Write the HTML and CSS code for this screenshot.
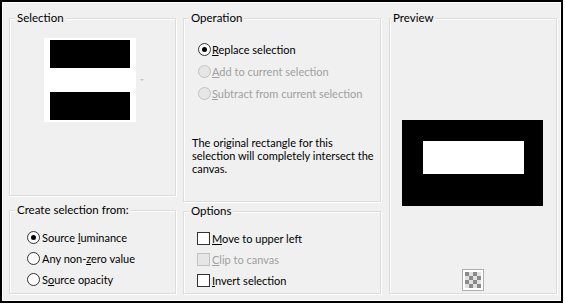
FILE: index.html
```html
<!DOCTYPE html>
<html lang="en">
<head>
    <meta charset="UTF-8">
    <title>Selection from mask</title>
    <link rel="stylesheet" href="styles.css">
</head>
<body>
    <div class="dialog">
        <div class="column">
            <fieldset class="group group-selection">
                <legend>Selection</legend>
                <div class="thumb-row">
                    <div class="thumb">
                        <div class="thumb-bar"></div>
                        <div class="thumb-bar"></div>
                    </div>
                    <span class="drop-arrow"></span>
                </div>
            </fieldset>
            <fieldset class="group group-source">
                <legend>Create selection from:</legend>
                <div class="option-list">
                    <label class="option"><span class="radio checked"></span><span>Source <u>l</u>uminance</span></label>
                    <label class="option"><span class="radio"></span><span>Any non-<u>z</u>ero value</span></label>
                    <label class="option"><span class="radio"></span><span>S<u>o</u>urce opacity</span></label>
                </div>
            </fieldset>
        </div>

        <div class="column">
            <fieldset class="group group-operation">
                <legend>Operation</legend>
                <div class="option-list">
                    <label class="option"><span class="radio checked"></span><span><u>R</u>eplace selection</span></label>
                    <label class="option disabled"><span class="radio"></span><span><u>A</u>dd to current selection</span></label>
                    <label class="option disabled"><span class="radio"></span><span><u>S</u>ubtract from current selection</span></label>
                </div>
                <p class="note">
                    The original rectangle for this<br>
                    selection will completely intersect the<br>
                    canvas.
                </p>
            </fieldset>
            <fieldset class="group group-options">
                <legend>Options</legend>
                <div class="option-list">
                    <label class="option"><span class="check"></span><span><u>M</u>ove to upper left</span></label>
                    <label class="option disabled"><span class="check"></span><span><u>C</u>lip to canvas</span></label>
                    <label class="option"><span class="check"></span><span><u>I</u>nvert selection</span></label>
                </div>
            </fieldset>
        </div>

        <div class="column column-preview">
            <fieldset class="group group-preview">
                <legend>Preview</legend>
                <div class="preview-box">
                    <div class="preview-hole"></div>
                </div>
                <span class="checker-button">
                    <svg width="22" height="22" viewBox="0 0 22 22">
                        <rect x="0.5" y="0.5" width="21" height="21" fill="#fff" stroke="#adadad"/>
                        <rect x="3" y="3" width="16" height="16" fill="#e2e2e2"/>
                        <g fill="#8a8a8a">
                            <rect x="3" y="3" width="4" height="4"/>
                            <rect x="11" y="3" width="4" height="4"/>
                            <rect x="7" y="7" width="4" height="4"/>
                            <rect x="15" y="7" width="4" height="4"/>
                            <rect x="3" y="11" width="4" height="4"/>
                            <rect x="11" y="11" width="4" height="4"/>
                            <rect x="7" y="15" width="4" height="4"/>
                            <rect x="15" y="15" width="4" height="4"/>
                        </g>
                    </svg>
                </span>
            </fieldset>
        </div>
    </div>
</body>
</html>
```

FILE: styles.css
```css
/* Общие стили */
* {
    margin: 0;
    padding: 0;
    box-sizing: border-box;
}

body {
    background: #fff;
    font-family: Lato, "Open Sans", sans-serif;
    font-size: 11px;
    color: #000;
}

/* Окно диалога */
.dialog {
    width: 563px;
    height: 303px;
    border: 2px solid #000;
    background: #f0f0f0;
    box-shadow: inset 0 0 0 1px #fff;
    padding: 9px 0 7px 7px;
    display: flex;
    gap: 7px;
}

.column {
    display: flex;
    flex-direction: column;
}

.column-preview {
    margin-left: 1px;
}

/* Рамка группы */
.group {
    border: 1px solid #dcdcdc;
    box-shadow: 1px 1px 0 #fff, inset 1px 1px 0 #fff;
    min-width: 0;
}

.group legend {
    margin-left: 5px;
    padding: 0 2px;
    font-size: 11.5px;
    line-height: 14px;
    background: #f0f0f0;
}

.group-selection {
    width: 167px;
    height: 185px;
}

.group-source {
    width: 167px;
    height: 91px;
    margin-top: 7px;
}

.group-operation {
    width: 198px;
    height: 191px;
}

.group-options {
    width: 198px;
    height: 90px;
    margin-top: 2px;
}

.group-preview {
    width: 168px;
    height: 283px;
    display: flex;
    flex-direction: column;
}

.group-preview legend {
    margin-left: 1px;
}

/* Миниатюра выделения */
.thumb-row {
    display: flex;
    align-items: center;
    margin: 13px 0 0 34px;
}

.thumb {
    width: 92px;
    height: 84px;
    background: #fff;
    padding: 2px 6px;
    display: flex;
    flex-direction: column;
    justify-content: space-between;
}

.thumb-bar {
    height: 28px;
    background: #000;
}

.drop-arrow {
    margin-left: 4px;
    border-left: 2px solid transparent;
    border-right: 2px solid transparent;
    border-top: 2px solid #c4c4c4;
}

/* Переключатели и флажки */
.option-list {
    margin-top: 10px;
}

.group-operation .option-list {
    margin-top: 13px;
}

.option {
    display: flex;
    align-items: center;
    height: 21px;
    white-space: nowrap;
}

.group-operation .option {
    height: 22px;
    padding-left: 14px;
}

.group-source .option {
    padding-left: 17px;
}

.group-options .option {
    padding-left: 13px;
}

.option u {
    text-decoration-thickness: 1px;
    text-underline-offset: 1px;
}

.option.disabled {
    color: #a0a0a0;
}

.radio {
    width: 13px;
    height: 13px;
    border: 1px solid #333;
    border-radius: 50%;
    background: #fff;
    margin-right: 1px;
    display: flex;
    align-items: center;
    justify-content: center;
    flex-shrink: 0;
}

.group-source .radio {
    margin-right: 2px;
}

.radio.checked::after {
    content: "";
    width: 5px;
    height: 5px;
    border-radius: 50%;
    background: #000;
}

.check {
    width: 13px;
    height: 13px;
    border: 1px solid #333;
    background: #fff;
    margin-right: 2px;
    flex-shrink: 0;
}

.disabled .radio,
.disabled .check {
    border-color: #c2c2c2;
    background: #e6e6e6;
}

/* Текст пояснения */
.note {
    margin: 32px 0 0 8px;
    line-height: 13px;
    white-space: nowrap;
}

/* Превью */
.preview-box {
    width: 141px;
    height: 86px;
    background: #000;
    margin: 95px 0 0 12px;
    padding: 21px 0 0 21px;
}

.preview-hole {
    width: 101px;
    height: 33px;
    background: #fff;
}

.checker-button {
    display: block;
    width: 22px;
    height: 22px;
    margin: 63px 0 0 72px;
}

.checker-button svg {
    display: block;
}
```
